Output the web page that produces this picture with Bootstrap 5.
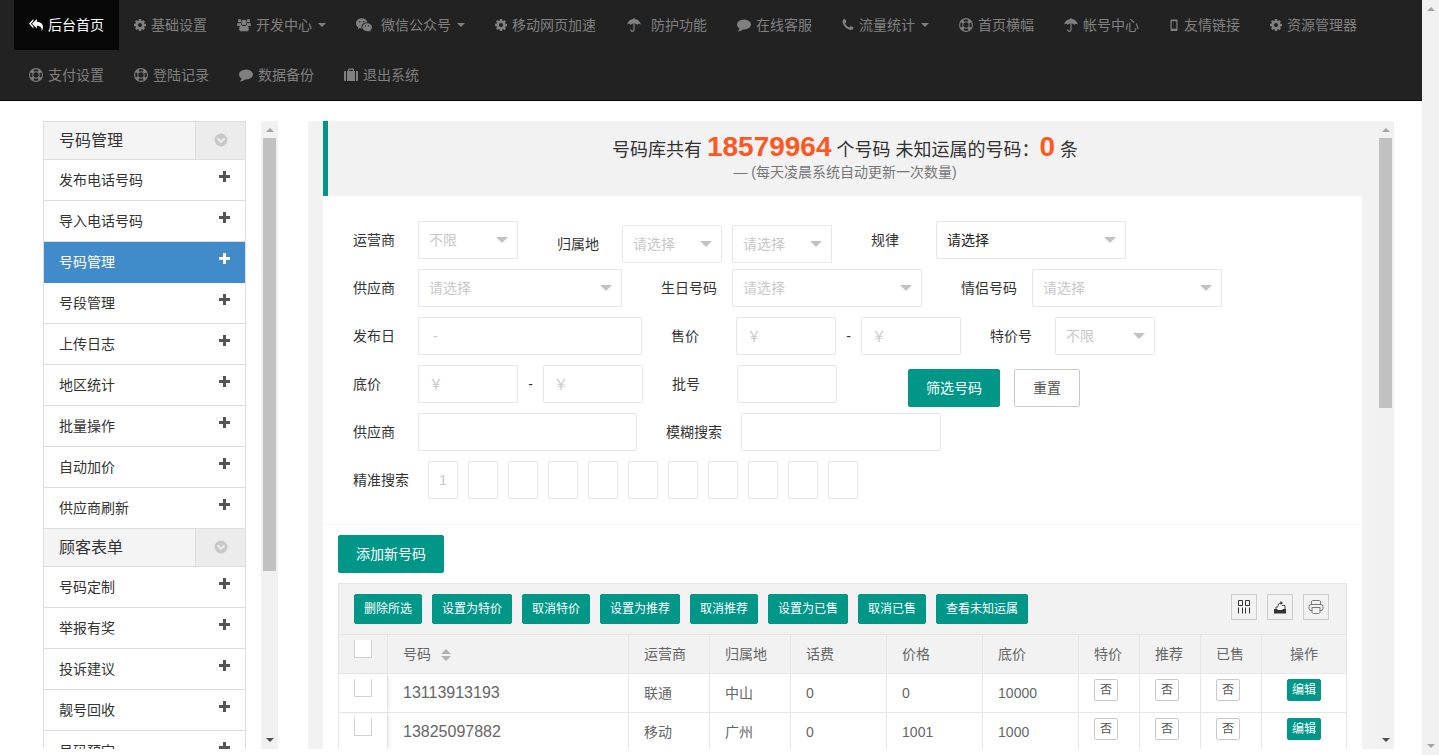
<!DOCTYPE html>
<html lang="zh-CN">
<head>
<meta charset="utf-8">
<meta name="viewport" content="width=device-width, initial-scale=1">
<title>号码管理后台</title>
<link href="https://cdn.jsdelivr.net/npm/bootstrap@5.3.0/dist/css/bootstrap.min.css" rel="stylesheet">
<style>
  :root { --teal: #009688; --line: #e6e6e6; --pane: #f2f2f2; }
  body { font: 14px/20px "Liberation Sans", "Noto Sans CJK SC", sans-serif; color: #333; background: #fff; }
  .ico { display: inline-block; width: 14px; height: 14px; fill: currentColor; flex: none; }

  /* scrollbars */
  .sbar { width: 17px; flex: none; background: #f1f1f1; }
  .sbar::before, .sbar::after { content: ""; margin: 7px auto; border: 4px solid transparent; }
  .sbar::before { border-top: 0; border-bottom-color: #a3a3a3; }
  .sbar::after { border-bottom: 0; border-top-color: #505050; margin-top: auto; }
  .sbar.idle::after { border-top-color: #a3a3a3; }
  .sbar span { width: 13px; margin: -1px auto 0; background: #c1c1c1; }
  .thumb-side { height: 69%; }
  .thumb-main { height: 43%; }

  /* top navigation */
  .topnav { background: #222; border-bottom: 1px solid #080808; padding: 0 14px; }
  .topnav .nav-link { color: #808080; padding: 15px; display: flex; align-items: center; gap: 5px; }
  .topnav .nav-link:hover { color: #fff; }
  .topnav .nav-link.active { color: #fff; background: #080808; }
  .topnav .dropdown-toggle::after { margin-left: 1px; border-width: 4px 4px 0; vertical-align: 0; }
  .ico-10 { width: 10px; }
  .ico-11 { width: 11px; }
  .ico-12 { width: 12px; }
  .ico-14 { width: 14px; }
  .ico-16 { width: 16px; }

  /* side menu */
  .shell { padding: 20px 28px 6px 43px; gap: 30px; }
  .side { width: 235px; flex: none; }
  .side-list { width: 203px; border: 1px solid #ddd; border-bottom: 0; }
  .side-head { height: 38px; border-bottom: 1px solid #ddd; background: #f4f4f4; }
  .side-head h2 { font-size: 16px; font-weight: 400; line-height: 38px; padding-left: 15px; }
  .side-head button { width: 50px; border: 0; border-left: 1px solid #ddd; background: #ececec; color: #c8c8c8; padding: 0 0 3px; }
  .side-item { height: 41px; padding: 10px 14px 10px 15px; border-bottom: 1px solid #ddd; color: #333; text-decoration: none; display: flex; justify-content: space-between; }
  .side-item .ico { color: #555; width: 13px; height: 13px; }
  .side-item.active { border-color: #428bca; }
  .side-item.active, .side-item.active .ico { background: #428bca; color: #fff; }

  /* content pane */
  .pane { background: var(--pane); }
  .sheet { margin: 0 15px; background: #fff; }
  .notice { border-left: 5px solid var(--teal); background: var(--pane); padding: 14px 0; text-align: center; }
  .notice h1 { font-size: 18px; line-height: 31px; height: 27px; font-weight: 400; margin: 0; }
  .notice strong { font-size: 28px; line-height: 20px; color: #ff5722; }
  .notice p { margin: 0; color: #777; }

  .filters { padding: 25px 30px 15px; border-bottom: 1px solid #f6f6f6; }
  .frow { display: flex; height: 38px; margin-bottom: 10px; gap: 29px; }
  .frow.loose { gap: 39px; }
  .fgroup { display: flex; flex: none; }
  .fgroup label, .fgroup .flabel { width: 65px; line-height: 38px; }
  .fgroup .lab4 { width: 71px; }
  .fgroup .lab5 { width: 75px; }
  .fgroup .form-control, .fgroup .form-select { height: 38px; border: 1px solid var(--line); border-radius: 2px; padding: 0 9px 0 10px; font-size: 14px; line-height: 36px; width: 100px; }
  .fgroup .form-select { color: #c9c9c9; background: #fff url("data:image/svg+xml,%3Csvg xmlns='http://www.w3.org/2000/svg' viewBox='0 0 12 6'%3E%3Cpath d='M0 0h12L6 6z' fill='%23c2c2c2'/%3E%3C/svg%3E") no-repeat right 9px center / 12px 6px; }
  .fgroup .form-select.picked { color: #222; }
  .form-control::placeholder { color: #c9c9c9; }
  .fgroup .w-190 { width: 190px; }
  .fgroup .w-200 { width: 200px; }
  .fgroup .w-204 { width: 204px; }
  .fgroup .w-219 { width: 219px; }
  .fgroup .w-224 { width: 224px; }
  .fgroup .digit { width: 30px; }
  .spaced { gap: 10px; }
  .dash { width: 25px; text-align: center; line-height: 38px; }
  .actions { padding-left: 42px; gap: 14px; }

  .btn-teal, .btn-plain { border-radius: 2px; font-size: 14px; line-height: 36px; padding: 0 17px; height: 38px; border: 1px solid var(--teal); background: var(--teal); color: #fff; }
  .btn-teal:hover { background: #33ab9f; color: #fff; }
  .btn-plain { background: #fff; color: #555; border-color: #c9c9c9; padding: 0 18px; }
  .btn-small { font-size: 12px; line-height: 28px; height: 30px; padding: 0 9px; }
  .btn-mini { font-size: 12px; line-height: 20px; height: 22px; padding: 0; width: 24px; }
  .btn-teal.btn-mini { width: 34px; }

  .listing { padding: 10px 15px; }
  .grid-box { margin-top: 10px; border: 1px solid var(--line); }
  .tools { background: var(--pane); border-bottom: 1px solid var(--line); padding: 10px 17px 10px 15px; gap: 10px; }
  .tool { width: 26px; height: 26px; border: 1px solid #ccc; background: transparent; padding: 0; display: flex; align-items: center; justify-content: center; color: #333; }
  .tool .ico { width: 16px; height: 16px; }
  .numbers { table-layout: fixed; width: 100%; color: #666; border-collapse: separate; border-spacing: 0; }
  .numbers th, .numbers td { height: 39px; padding: 0 0 0 15px; font-weight: 400; border: 0 solid var(--line); border-width: 0 1px 1px 0; vertical-align: middle; }
  .numbers th { background: var(--pane); }
  .numbers tr > :last-child { border-right: 0; text-align: center; padding-left: 0; }
  .numbers tr > :first-child { vertical-align: top; padding-top: 5px; box-shadow: 3px 0 4px -2px rgba(0,0,0,.1); }
  .numbers td:nth-child(n+8) { vertical-align: top; padding-top: 5px; line-height: 22px; }
  .numbers td:nth-child(n+8) button { display: inline-block; vertical-align: top; }
  .numbers .num { font-size: 16px; }
  .tick { appearance: none; display: block; width: 18px; height: 18px; margin: 0; background: #fff; border: 1px solid #d2d2d2; border-top: 0; }
  .tick:checked { background: var(--teal); }
  .sort { width: 10px; height: 12px; margin-left: 6px; fill: #b2b2b2; vertical-align: -2px; }
  .c-tick { width: 49px; } .c-num { width: auto; } .c-place { width: 81px; } .c-price { width: 96px; } .c-flag { width: 61px; } .c-edit { width: 84px; }
</style>
</head>
<body>
<svg class="d-none" aria-hidden="true">
  <symbol id="i-reply" viewBox="0 0 16 14"><path d="M5 0v2.500L2.200 5.500 5 8.500V11L0 5.500zM9 0v3.200c4.500.2 7 2.500 7 6.300 0 1.500-.6 3-1.500 4.500.5-4-1.500-6-5.500-6.100V11L3.500 5.500z"/></symbol>
  <symbol id="i-cog" viewBox="128 128 1536 1536"><path d="M1152 896q0-106-75-181t-181-75-181 75-75 181 75 181 181 75 181-75 75-181zm512-109v222q0 12-8 23t-20 13l-185 28q-19 54-39 91 35 50 107 138 10 12 10 25t-9 23q-27 37-99 108t-94 71q-12 0-26-9l-138-108q-44 23-91 38-16 136-29 186-7 28-36 28h-222q-14 0-24.500-8.500t-11.500-21.500l-28-184q-49-16-90-37l-141 107q-10 9-25 9-14 0-25-11-126-114-165-168-7-10-7-23 0-12 8-23 15-21 51-66.500t54-70.500q-27-50-41-99l-183-27q-13-2-21-12.500t-8-23.500v-222q0-12 8-23t19-13l186-28q14-46 39-92-40-57-107-138-10-12-10-24 0-10 9-23 26-36 98.500-107.500t94.500-71.500q13 0 26 10l138 107q44-23 91-38 16-136 29-186 7-28 36-28h222q14 0 24.500 8.500t11.500 21.500l28 184q49 16 90 37l142-107q9-9 24-9 13 0 25 10 129 119 165 170 7 8 7 22 0 12-8 23-15 21-51 66.500t-54 70.500q26 50 41 98l183 28q13 2 21 12.500t8 23.500z"/></symbol>
  <symbol id="i-users" viewBox="0 0 16 14"><circle cx="3" cy="2.200" r="2"/><circle cx="13" cy="2.200" r="2"/><circle cx="8" cy="4" r="2.900"/><path d="M0 7.500C0 5.500.7 4.500 1.500 4.300c1 .8 2 .8 3 .5 0 1 .3 1.700.8 2.400-1 .1-1.800.4-2.500 1H1.200C.4 8.200 0 8 0 7.500zM16 7.500c0-2-.7-3-1.500-3.200-1 .8-2 .8-3 .5 0 1-.3 1.700-.8 2.400 1 .1 1.800.4 2.500 1h1.600c.8 0 1.200-.2 1.200-.7zM2.500 12c0-3 1-4.800 2.800-4.800 1.700 1.300 3.700 1.300 5.400 0 1.800 0 2.800 1.800 2.800 4.800 0 1.300-.8 2-2 2h-7c-1.200 0-2-.7-2-2z"/></symbol>
  <symbol id="i-wechat" viewBox="0 0 18 15"><path fill-rule="evenodd" d="M6.500 0C10 0 12.400 2 12.900 4.600 9 4.400 6 6.700 6.200 9.900c.1.600.2 1 .4 1.400-.8 0-1.500-.1-2.200-.3L2 12.200l.6-2C1 9.100 0 7.600 0 5.700 0 2.500 3 0 6.500 0zM4.300 3a.8.8 0 1 0 0 1.700.8.800 0 0 0 0-1.700zm4.500 0a.8.8 0 1 0 0 1.700.8.800 0 0 0 0-1.700zM12.500 5.400c3 0 5.500 2.100 5.500 4.700 0 1.500-.8 2.700-2 3.600l.5 1.300-1.900-.8c-.7.2-1.300.3-2.100.3-3 0-5.400-2-5.400-4.400 0-2.600 2.400-4.700 5.400-4.700zm-1.800 2.500a.7.700 0 1 0 0 1.400.7.700 0 0 0 0-1.400zm3.500 0a.7.700 0 1 0 0 1.400.7.700 0 0 0 0-1.400z"/></symbol>
  <symbol id="i-umbrella" viewBox="0 0 14 14"><path d="M6.400 1V.5a.6.6 0 0 1 1.200 0V1C11 1.300 13.300 3.500 14 6.700c-1.200-1.200-2.800-1.200-3.800.3-.7-1-1.500-1.500-2.600-1.500V11.500c0 3.300-4.600 3.300-4.600 0h1.300c0 1.600 2.100 1.600 2.100 0v-6C5.300 5.500 4.500 6 3.800 7 2.800 5.500 1.200 5.500 0 6.700.7 3.500 3 1.300 6.400 1z"/></symbol>
  <symbol id="i-comment" viewBox="0 128 1792 1664"><path d="M1792 896q0 174-120 321.500t-326 233-450 85.500q-70 0-145-8-198 175-460 242-49 14-114 22-17 2-30.500-9t-17.500-29v-1q-3-4-.5-12t2-10 4.500-9.500l6-9 7-8.500 8-9q7-8 31-34.500t34.500-38 31-39.500 32.500-51 27-59 26-76q-157-89-247.500-220t-90.500-281q0-130 71-248.500t191-204.500 286-136.500 348-50.500q244 0 450 85.500t326 233 120 321.500z"/></symbol>
  <symbol id="i-phone" viewBox="128 128 1536 1536"><path d="M1600 1240q0 27-10 70.500t-21 68.500q-21 50-122 106-94 51-186 51-27 0-53-3.500t-57.500-12.500-47-14.500-55.500-20.500-49-18q-98-35-175-83-127-79-264-216t-216-264q-48-77-83-175-3-9-18-49t-20.500-55.500-14.500-47-12.500-57.500-3.500-53q0-92 51-186 56-101 106-122 25-11 68.500-21t70.500-10q14 0 21 3 18 6 53 76 11 19 30 54t35 63.500 31 53.500q3 4 17.500 25t21.500 35.500 7 28.500q0 20-28.500 50t-62 55-62 53-28.500 46q0 9 5 22.500t8.500 20.500 14 24 11.500 19q76 137 174 235t235 174q2 1 19 11.500t24 14 20.500 8.500 22.500 5q18 0 46-28.500t53-62 55-62 50-28.500q14 0 28.500 7t35.500 21.500 25 17.500q25 15 53.500 31t63.500 35 54 30q70 35 76 53 3 7 3 21z"/></symbol>
  <symbol id="i-ring" viewBox="0 0 14 14"><g fill="none" stroke="currentColor"><circle cx="7" cy="7" r="6.400" stroke-width="1.100"/><circle cx="7" cy="7" r="3.300"/><path stroke-width="2.600" d="M2.700 4.800A5 5 0 0 1 4.800 2.700M9.200 2.700a5 5 0 0 1 2.100 2.100M11.300 9.200a5 5 0 0 1-2.100 2.100M4.800 11.300A5 5 0 0 1 2.700 9.200"/></g></symbol>
  <symbol id="i-mobile" viewBox="0 0 10 14"><path fill-rule="evenodd" d="M2.500 1.500h5c.6 0 1 .4 1 1V12c0 .6-.4 1-1 1h-5c-.6 0-1-.4-1-1V2.500c0-.6.400-1 1-1zm.2 1.800v7.400h4.600V3.300z"/></symbol>
  <symbol id="i-case" viewBox="0 0 14 14"><path fill-rule="evenodd" d="M4 3V1.700C4 1 4.400.6 5 .6h4c.6 0 1 .4 1 1.100V3h1v10H3V3zm1.200 0h3.600V1.800H5.200zM0 4.400C0 3.500.5 3 1.300 3H2v10h-.7C.5 13 0 12.500 0 11.700zM12 3h.7c.8 0 1.300.5 1.300 1.400v7.300c0 .8-.5 1.300-1.300 1.300H12z"/></symbol>
  <symbol id="i-plus" viewBox="0 0 13 13"><path d="M5 1h3v4h4v3H8v4H5V8H1V5h4z"/></symbol>
  <symbol id="i-down" viewBox="0 0 14 14"><path fill-rule="evenodd" d="M7 .5a6.500 6.500 0 1 1 0 13 6.500 6.500 0 0 1 0-13zM2.800 6 7 10.300 11.200 6 9.800 4.600 7 7.400 4.200 4.600z"/></symbol>
  <symbol id="i-cols" viewBox="0 0 16 16"><path fill="none" stroke="currentColor" d="M2.500 1.500h4v5h-4zM9.500 1.500h4v5h-4zM2.500 8.500v6M6.500 8.500v6M9.500 8.500v6M13.500 8.500v6"/></symbol>
  <symbol id="i-export" viewBox="0 0 16 16"><path d="M2 10h3l1 1h4l1-1h3v4.500H2z"/><path fill="none" stroke="currentColor" stroke-width=".9" d="M10 6.500h3V10M4 10V8h2M6 7.500c0-2.500 1-3.500 3-3.500"/><path d="M8.500 2 11 4 8.500 6z"/></symbol>
  <symbol id="i-print" viewBox="0 0 16 16"><g fill="none" stroke="#777"><rect x="1" y="5.500" width="14" height="6" rx="2"/><path d="M3.500 5.500V3c0-.8.500-1.500 1.500-1.500h6c1 0 1.500.7 1.500 1.500v2.500"/><path fill="#f2f2f2" d="M4 8.500h8V13c0 .8-.500 1.500-1.500 1.500h-5C4.500 14.500 4 13.800 4 13z"/></g></symbol>
</svg>

<div class="d-flex vh-100 overflow-hidden">
  <div class="d-flex flex-column flex-grow-1 overflow-hidden">
    <nav class="topnav" aria-label="主导航">
      <ul class="nav">
        <li class="nav-item"><a class="nav-link active" href="#"><svg class="ico"><use href="#i-reply"/></svg>后台首页</a></li>
        <li class="nav-item"><a class="nav-link" href="#"><svg class="ico ico-12"><use href="#i-cog"/></svg>基础设置</a></li>
        <li class="nav-item"><a class="nav-link dropdown-toggle" href="#"><svg class="ico ico-14"><use href="#i-users"/></svg>开发中心</a></li>
        <li class="nav-item"><a class="nav-link dropdown-toggle" href="#"><svg class="ico ico-16 me-1"><use href="#i-wechat"/></svg>微信公众号</a></li>
        <li class="nav-item"><a class="nav-link" href="#"><svg class="ico ico-12"><use href="#i-cog"/></svg>移动网页加速</a></li>
        <li class="nav-item"><a class="nav-link" href="#"><svg class="ico ico-16 me-1"><use href="#i-umbrella"/></svg>防护功能</a></li>
        <li class="nav-item"><a class="nav-link" href="#"><svg class="ico"><use href="#i-comment"/></svg>在线客服</a></li>
        <li class="nav-item"><a class="nav-link dropdown-toggle" href="#"><svg class="ico ico-12"><use href="#i-phone"/></svg>流量统计</a></li>
        <li class="nav-item"><a class="nav-link" href="#"><svg class="ico"><use href="#i-ring"/></svg>首页横幅</a></li>
        <li class="nav-item"><a class="nav-link" href="#"><svg class="ico"><use href="#i-umbrella"/></svg>帐号中心</a></li>
        <li class="nav-item"><a class="nav-link" href="#"><svg class="ico ico-10"><use href="#i-mobile"/></svg>友情链接</a></li>
        <li class="nav-item"><a class="nav-link" href="#"><svg class="ico ico-12"><use href="#i-cog"/></svg>资源管理器</a></li>
        <li class="nav-item"><a class="nav-link" href="#"><svg class="ico"><use href="#i-ring"/></svg>支付设置</a></li>
        <li class="nav-item"><a class="nav-link" href="#"><svg class="ico"><use href="#i-ring"/></svg>登陆记录</a></li>
        <li class="nav-item"><a class="nav-link" href="#"><svg class="ico"><use href="#i-comment"/></svg>数据备份</a></li>
        <li class="nav-item"><a class="nav-link" href="#"><svg class="ico"><use href="#i-case"/></svg>退出系统</a></li>
      </ul>
    </nav>

    <div class="shell d-flex flex-grow-1 overflow-hidden">
      <aside class="side d-flex justify-content-between overflow-hidden">
        <div class="side-list overflow-hidden">
          <div class="side-head d-flex justify-content-between"><h2 class="m-0">号码管理</h2><button type="button" aria-label="折叠号码管理"><svg class="ico"><use href="#i-down"/></svg></button></div>
          <a class="side-item" href="#">发布电话号码<svg class="ico"><use href="#i-plus"/></svg></a>
          <a class="side-item" href="#">导入电话号码<svg class="ico"><use href="#i-plus"/></svg></a>
          <a class="side-item active" href="#">号码管理<svg class="ico"><use href="#i-plus"/></svg></a>
          <a class="side-item" href="#">号段管理<svg class="ico"><use href="#i-plus"/></svg></a>
          <a class="side-item" href="#">上传日志<svg class="ico"><use href="#i-plus"/></svg></a>
          <a class="side-item" href="#">地区统计<svg class="ico"><use href="#i-plus"/></svg></a>
          <a class="side-item" href="#">批量操作<svg class="ico"><use href="#i-plus"/></svg></a>
          <a class="side-item" href="#">自动加价<svg class="ico"><use href="#i-plus"/></svg></a>
          <a class="side-item" href="#">供应商刷新<svg class="ico"><use href="#i-plus"/></svg></a>
          <div class="side-head d-flex justify-content-between"><h2 class="m-0">顾客表单</h2><button type="button" aria-label="折叠顾客表单"><svg class="ico"><use href="#i-down"/></svg></button></div>
          <a class="side-item" href="#">号码定制<svg class="ico"><use href="#i-plus"/></svg></a>
          <a class="side-item" href="#">举报有奖<svg class="ico"><use href="#i-plus"/></svg></a>
          <a class="side-item" href="#">投诉建议<svg class="ico"><use href="#i-plus"/></svg></a>
          <a class="side-item" href="#">靓号回收<svg class="ico"><use href="#i-plus"/></svg></a>
          <a class="side-item" href="#">号码预定<svg class="ico"><use href="#i-plus"/></svg></a>
        </div>
        <div class="sbar d-flex flex-column" aria-hidden="true"><span class="thumb-side"></span></div>
      </aside>

      <main class="pane d-flex flex-grow-1 overflow-hidden">
        <div class="flex-grow-1 overflow-hidden">
          <div class="sheet">
            <div class="notice">
              <h1>号码库共有 <strong>18579964</strong> 个号码 未知运属的号码：<strong>0</strong> 条</h1>
              <p>— (每天凌晨系统自动更新一次数量)</p>
            </div>

            <form class="filters">
              <div class="frow loose">
                <div class="fgroup"><label for="carrier">运营商</label><select class="form-select" id="carrier"><option>不限</option></select></div>
                <div class="fgroup pt-1"><label for="prov">归属地</label><div class="d-flex spaced"><select class="form-select" id="prov"><option>请选择</option></select><select class="form-select" id="city" aria-label="城市"><option>请选择</option></select></div></div>
                <div class="fgroup"><label for="rule">规律</label><select class="form-select picked w-190" id="rule"><option>请选择</option></select></div>
              </div>
              <div class="frow loose">
                <div class="fgroup"><label for="vendor">供应商</label><select class="form-select w-204" id="vendor"><option>请选择</option></select></div>
                <div class="fgroup"><label class="lab4" for="birth">生日号码</label><select class="form-select w-190" id="birth"><option>请选择</option></select></div>
                <div class="fgroup"><label class="lab4" for="pair">情侣号码</label><select class="form-select w-190" id="pair"><option>请选择</option></select></div>
              </div>
              <div class="frow">
                <div class="fgroup"><label for="date">发布日</label><input class="form-control w-224" id="date" placeholder=" - "></div>
                <div class="fgroup"><label for="sell">售价</label><input class="form-control" id="sell" placeholder="￥"><span class="dash">-</span><input class="form-control" aria-label="售价上限" placeholder="￥"></div>
                <div class="fgroup"><label for="special">特价号</label><select class="form-select" id="special"><option>不限</option></select></div>
              </div>
              <div class="frow">
                <div class="fgroup"><label for="base">底价</label><input class="form-control" id="base" placeholder="￥"><span class="dash">-</span><input class="form-control" aria-label="底价上限" placeholder="￥"></div>
                <div class="fgroup"><label for="batch">批号</label><input class="form-control" id="batch"></div>
                <div class="fgroup actions pt-1"><button class="btn-teal" type="button">筛选号码</button><button class="btn-plain" type="reset">重置</button></div>
              </div>
              <div class="frow">
                <div class="fgroup"><label for="vendor2">供应商</label><input class="form-control w-219" id="vendor2"></div>
                <div class="fgroup"><label class="lab5" for="fuzzy">模糊搜索</label><input class="form-control w-200" id="fuzzy"></div>
              </div>
              <div class="frow">
                <div class="fgroup" role="group" aria-labelledby="exact">
                  <span class="flabel lab5" id="exact">精准搜索</span>
                  <div class="d-flex spaced">
                    <input class="form-control digit" aria-label="第1位" placeholder="1">
                    <input class="form-control digit" aria-label="第2位">
                    <input class="form-control digit" aria-label="第3位">
                    <input class="form-control digit" aria-label="第4位">
                    <input class="form-control digit" aria-label="第5位">
                    <input class="form-control digit" aria-label="第6位">
                    <input class="form-control digit" aria-label="第7位">
                    <input class="form-control digit" aria-label="第8位">
                    <input class="form-control digit" aria-label="第9位">
                    <input class="form-control digit" aria-label="第10位">
                    <input class="form-control digit" aria-label="第11位">
                  </div>
                </div>
              </div>
            </form>

            <section class="listing">
              <button class="btn-teal" type="button">添加新号码</button>
              <div class="grid-box">
                <div class="tools d-flex">
                  <button class="btn-teal btn-small" type="button">删除所选</button>
                  <button class="btn-teal btn-small" type="button">设置为特价</button>
                  <button class="btn-teal btn-small" type="button">取消特价</button>
                  <button class="btn-teal btn-small" type="button">设置为推荐</button>
                  <button class="btn-teal btn-small" type="button">取消推荐</button>
                  <button class="btn-teal btn-small" type="button">设置为已售</button>
                  <button class="btn-teal btn-small" type="button">取消已售</button>
                  <button class="btn-teal btn-small" type="button">查看未知运属</button>
                  <button class="tool ms-auto" type="button" aria-label="筛选列"><svg class="ico"><use href="#i-cols"/></svg></button>
                  <button class="tool" type="button" aria-label="导出"><svg class="ico"><use href="#i-export"/></svg></button>
                  <button class="tool" type="button" aria-label="打印"><svg class="ico"><use href="#i-print"/></svg></button>
                </div>
                <table class="numbers">
                  <colgroup><col class="c-tick"><col class="c-num"><col class="c-place"><col class="c-place"><col class="c-price"><col class="c-price"><col class="c-price"><col class="c-flag"><col class="c-flag"><col class="c-flag"><col class="c-edit"></colgroup>
                  <thead><tr>
                    <th><input class="tick" type="checkbox" aria-label="全选"></th>
                    <th>号码 <svg class="sort" viewBox="0 0 10 12"><path d="M5 0l5 5H0zM0 7h10l-5 5z"/></svg></th>
                    <th>运营商</th><th>归属地</th><th>话费</th><th>价格</th><th>底价</th><th>特价</th><th>推荐</th><th>已售</th><th>操作</th>
                  </tr></thead>
                  <tbody>
                    <tr>
                      <td><input class="tick" type="checkbox" aria-label="选择 13113913193"></td>
                      <td class="num">13113913193</td><td>联通</td><td>中山</td><td>0</td><td>0</td><td>10000</td>
                      <td><button class="btn-plain btn-mini" type="button">否</button></td><td><button class="btn-plain btn-mini" type="button">否</button></td><td><button class="btn-plain btn-mini" type="button">否</button></td>
                      <td><button class="btn-teal btn-mini" type="button">编辑</button></td>
                    </tr>
                    <tr>
                      <td><input class="tick" type="checkbox" aria-label="选择 13825097882"></td>
                      <td class="num">13825097882</td><td>移动</td><td>广州</td><td>0</td><td>1001</td><td>1000</td>
                      <td><button class="btn-plain btn-mini" type="button">否</button></td><td><button class="btn-plain btn-mini" type="button">否</button></td><td><button class="btn-plain btn-mini" type="button">否</button></td>
                      <td><button class="btn-teal btn-mini" type="button">编辑</button></td>
                    </tr>
                  </tbody>
                </table>
              </div>
            </section>
          </div>
        </div>
        <div class="sbar d-flex flex-column" aria-hidden="true"><span class="thumb-main"></span></div>
      </main>
    </div>
  </div>
  <div class="sbar idle d-flex flex-column" aria-hidden="true"></div>
</div>
<script src="https://cdn.jsdelivr.net/npm/bootstrap@5.3.0/dist/js/bootstrap.bundle.min.js"></script>
</body>
</html>
